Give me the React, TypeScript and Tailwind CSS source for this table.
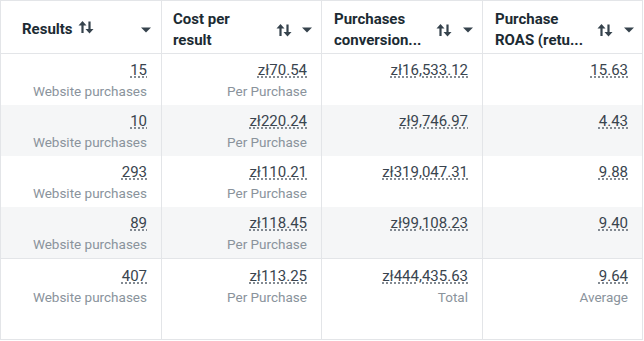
const rows = [
  { r: "15", c: "zł70.54", p: "zł16,533.12", roas: "15.63" },
  { r: "10", c: "zł220.24", p: "zł9,746.97", roas: "4.43" },
  { r: "293", c: "zł110.21", p: "zł319,047.31", roas: "9.88" },
  { r: "89", c: "zł118.45", p: "zł99,108.23", roas: "9.40" },
];

function SortIcon() {
  return (
    <svg width="16" height="14" viewBox="0 0 16 14" className="shrink-0">
      <path d="M4.5 1 L0.5 5.6 H3.4 V13 H5.6 V5.6 H8.5 Z" fill="#36434d" />
      <path d="M11.5 13.5 L7.5 8.9 H10.4 V1.5 H12.6 V8.9 H15.5 Z" fill="#36434d" />
    </svg>
  );
}

function Caret() {
  return (
    <svg width="10" height="6" viewBox="0 0 10 6" className="shrink-0">
      <path d="M0 0.5 H10 L5 5.5 Z" fill="#36434d" />
    </svg>
  );
}

function Val({ children }: { children: string }) {
  return (
    <span className="text-[15px] leading-[20px] text-[#39444e] underline decoration-dotted decoration-[#5c6670] underline-offset-[2px]">
      {children}
    </span>
  );
}

function Sub({ children }: { children: string }) {
  return <span className="text-[13.5px] leading-[22px] text-[#8a939c]">{children}</span>;
}

function Cell({ v, sub, first }: { v: string; sub?: string; first?: boolean }) {
  return (
    <div
      className={`flex flex-col items-end pr-[14px] pt-[6px] ${first ? "" : "border-l border-[#e3e5e8]"}`}
    >
      <Val>{v}</Val>
      {sub && <Sub>{sub}</Sub>}
    </div>
  );
}

export default function App() {
  return (
    <div
      className="w-[644px] h-[341px] bg-white overflow-hidden"
      style={{ fontFamily: "Roboto, 'Noto Sans', sans-serif" }}
    >
      <div className="w-[643px] border border-[#e3e5e8]">
        <div className="grid grid-cols-[160px_160px_161px_1fr] h-[53px] border-b border-[#e3e5e8] text-[15px] font-bold text-[#1c2b33] leading-[21px]">
          <div className="flex items-center pt-[5px] pl-[21px] pr-[10px]">
            <span>Results</span>
            <span className="ml-[5px] mt-[-5px]"><SortIcon /></span>
            <span className="ml-auto"><Caret /></span>
          </div>
          <div className="flex items-center pt-[5px] pl-[11px] pr-[9px] border-l border-[#e3e5e8]">
            <span className="flex-1">Cost per<br />result</span>
            <SortIcon />
            <span className="ml-[10px]"><Caret /></span>
          </div>
          <div className="flex items-center pt-[5px] pl-[12px] pr-[9px] border-l border-[#e3e5e8]">
            <span className="flex-1">Purchases<br />conversion...</span>
            <SortIcon />
            <span className="ml-[11px]"><Caret /></span>
          </div>
          <div className="flex items-center pt-[5px] pl-[12px] pr-[8px] border-l border-[#e3e5e8]">
            <span className="flex-1">Purchase<br />ROAS (retu...</span>
            <SortIcon />
            <span className="ml-[11px]"><Caret /></span>
          </div>
        </div>
        {rows.map((row, i) => (
          <div
            key={i}
            className={`grid grid-cols-[160px_160px_161px_1fr] h-[51px] ${i % 2 === 1 ? "bg-[#f5f6f7]" : "bg-white"}`}
          >
            <Cell first v={row.r} sub="Website purchases" />
            <Cell v={row.c} sub="Per Purchase" />
            <Cell v={row.p} />
            <Cell v={row.roas} />
          </div>
        ))}
        <div className="grid grid-cols-[160px_160px_161px_1fr] h-[81px] border-t border-[#e3e5e8]">
          <div className="flex flex-col items-end pr-[14px] pt-[7px]">
            <Val>407</Val>
            <Sub>Website purchases</Sub>
          </div>
          <div className="flex flex-col items-end pr-[14px] pt-[7px] border-l border-[#e3e5e8]">
            <Val>zł113.25</Val>
            <Sub>Per Purchase</Sub>
          </div>
          <div className="flex flex-col items-end pr-[14px] pt-[7px] border-l border-[#e3e5e8]">
            <Val>zł444,435.63</Val>
            <Sub>Total</Sub>
          </div>
          <div className="flex flex-col items-end pr-[14px] pt-[7px] border-l border-[#e3e5e8]">
            <Val>9.64</Val>
            <Sub>Average</Sub>
          </div>
        </div>
      </div>
    </div>
  );
}
